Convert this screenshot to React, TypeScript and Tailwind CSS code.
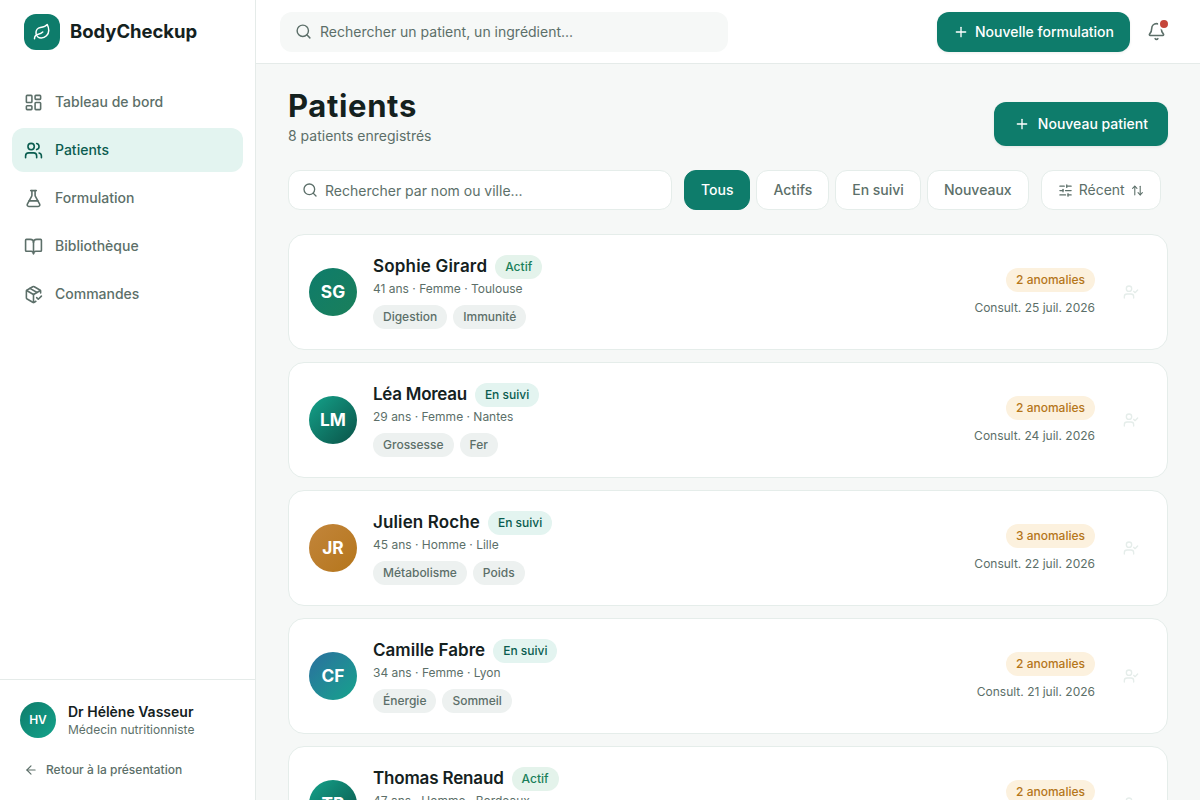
import React from 'react';
import {
  ArrowLeft,
  ArrowUpDown,
  Bell,
  BookOpen,
  FlaskConical,
  LayoutDashboard,
  Leaf,
  PackageCheck,
  Plus,
  Search,
  SlidersHorizontal,
  UserCheck,
  Users,
} from 'lucide-react';

type Status = 'Actif' | 'En suivi';

interface Patient {
  initials: string;
  name: string;
  nameTracking: string;
  status: Status;
  details: string;
  tags: string[];
  anomalies: number;
  consult: string;
  avatar: string;
}

const navItems = [
  { label: 'Tableau de bord', icon: LayoutDashboard },
  { label: 'Patients', icon: Users },
  { label: 'Formulation', icon: FlaskConical },
  { label: 'Bibliothèque', icon: BookOpen },
  { label: 'Commandes', icon: PackageCheck },
];

const filters = ['Tous', 'Actifs', 'En suivi', 'Nouveaux'];

const patients: Patient[] = [
  {
    initials: 'SG',
    name: 'Sophie Girard',
    nameTracking: 'tracking-[0.19px]',
    status: 'Actif',
    details: '41 ans · Femme · Toulouse',
    tags: ['Digestion', 'Immunité'],
    anomalies: 2,
    consult: '25 juil. 2026',
    avatar: 'from-[#0e7c6b] to-[#1a7f5a]',
  },
  {
    initials: 'LM',
    name: 'Léa Moreau',
    nameTracking: 'tracking-[-0.28px]',
    status: 'En suivi',
    details: '29 ans · Femme · Nantes',
    tags: ['Grossesse', 'Fer'],
    anomalies: 2,
    consult: '24 juil. 2026',
    avatar: 'from-[#14a38b] to-[#0a5348]',
  },
  {
    initials: 'JR',
    name: 'Julien Roche',
    nameTracking: 'tracking-[0.12px]',
    status: 'En suivi',
    details: '45 ans · Homme · Lille',
    tags: ['Métabolisme', 'Poids'],
    anomalies: 3,
    consult: '22 juil. 2026',
    avatar: 'from-[#c2853a] to-[#b5761a]',
  },
  {
    initials: 'CF',
    name: 'Camille Fabre',
    nameTracking: 'tracking-[0.03px]',
    status: 'En suivi',
    details: '34 ans · Femme · Lyon',
    tags: ['Énergie', 'Sommeil'],
    anomalies: 2,
    consult: '21 juil. 2026',
    avatar: 'from-[#2a6f9e] to-[#14a38b]',
  },
  {
    initials: 'TR',
    name: 'Thomas Renaud',
    nameTracking: 'tracking-[-0.17px]',
    status: 'Actif',
    details: '47 ans · Homme · Bordeaux',
    tags: ['Cardio', 'Stress'],
    anomalies: 2,
    consult: '20 juil. 2026',
    avatar: 'from-[#14a38b] to-[#0a5348]',
  },
];

function Sidebar({ currentPage }: { currentPage: string }) {
  return (
    <aside className="flex w-64 shrink-0 flex-col border-r border-[#e5ebe9] bg-white">
      <div className="flex h-16 items-center gap-2.5 px-6">
        <div className="flex size-9 items-center justify-center rounded-xl bg-[#0e7c6b] text-white">
          <Leaf size={18} strokeWidth={2} />
        </div>
        <span className="text-[18.5px] font-bold tracking-[-0.05px] text-[#14211e]">BodyCheckup</span>
      </div>

      <nav className="flex flex-1 flex-col gap-1 px-3 pt-4">
        {navItems.map(({ label, icon: Icon }) => (
          <a
            key={label}
            href="#"
            className={`flex h-11 items-center gap-3 rounded-xl px-3 text-sm font-medium ${
              label === currentPage ? 'bg-[#e3f4f0] text-[#0a5c4f]' : 'text-[#5c6f69]'
            }`}
          >
            <Icon size={19} strokeWidth={2} />
            {label}
          </a>
        ))}
      </nav>

      <div className="border-t border-[#e5ebe9] px-3 pt-3 pb-3">
        <div className="flex items-center gap-3 px-2 py-2.5">
          <div className="flex size-9 items-center justify-center rounded-full bg-linear-to-br from-[#0e7c6b] to-[#14a38b] text-xs font-semibold text-white">
            HV
          </div>
          <div className="-mb-0.5">
            <p className="text-sm leading-[18px] font-semibold text-[#14211e]">Dr Hélène Vasseur</p>
            <p className="text-xs leading-[18px] text-[#5c6f69]">Médecin nutritionniste</p>
          </div>
        </div>
        <a href="#" className="mt-1 flex h-9 items-center gap-2 px-3 text-xs font-medium text-[#5c6f69]">
          <ArrowLeft size={14} strokeWidth={2} />
          Retour à la présentation
        </a>
      </div>
    </aside>
  );
}

function Topbar() {
  return (
    <header className="flex h-16 shrink-0 items-center justify-between border-b border-[#e5ebe9] bg-white px-6">
      <div className="flex h-10 w-[448px] items-center gap-2 rounded-xl bg-[#f6f8f7] px-[15px] text-[#5c6f69]">
        <Search size={17} strokeWidth={2} />
        <span className="text-sm">Rechercher un patient, un ingrédient...</span>
      </div>
      <div className="flex items-center gap-1.5">
        <button className="flex h-10 items-center gap-1.5 rounded-xl bg-[#0e7c6b] px-4 text-sm font-medium text-white shadow-[0_1px_3px_rgba(20,33,30,0.08)]">
          <Plus size={16} strokeWidth={2} />
          Nouvelle formulation
        </button>
        <button className="relative flex size-10 items-center justify-center text-[#5c6f69]">
          <Bell size={19} strokeWidth={2} />
          <span className="absolute top-1.5 right-1.5 size-3 rounded-full border-2 border-white bg-[#c4453a]" />
        </button>
      </div>
    </header>
  );
}

function PatientCard({ patient }: { patient: Patient }) {
  return (
    <div className="flex items-center rounded-2xl border border-[#e5edea] bg-white p-5">
      <div
        className={`flex size-12 items-center justify-center rounded-full bg-linear-to-br text-[17.28px] leading-6 font-bold text-white ${patient.avatar}`}
      >
        {patient.initials}
      </div>
      <div className="ml-4 flex-1">
        <div className="flex h-6 items-center gap-2">
          <h3 className={`pb-0.5 text-[17px] leading-6 font-semibold text-[#14211e] ${patient.nameTracking}`}>
            {patient.name}
          </h3>
          <span
            className={`flex h-6 items-center rounded-full px-2.5 text-xs font-medium ${
              patient.status === 'Actif' ? 'bg-[#e4f3eb] text-[#1a7f5a]' : 'bg-[#e3f4f0] text-[#0a5c4f]'
            }`}
          >
            {patient.status}
          </span>
        </div>
        <p className="text-xs leading-5 text-[#5c6f69]">{patient.details}</p>
        <div className="mt-1.5 flex gap-1.5">
          {patient.tags.map((tag) => (
            <span
              key={tag}
              className="flex h-6 items-center rounded-full bg-[#edf1f0] px-2.5 text-xs font-medium text-[#5c6f69]"
            >
              {tag}
            </span>
          ))}
        </div>
      </div>
      <div className="flex flex-col items-end gap-2">
        <span className="flex h-6 items-center rounded-full bg-[#fcf1de] px-2.5 text-xs font-medium text-[#b5761a]">
          {patient.anomalies} anomalies
        </span>
        <span className="text-xs text-[#5c6f69]">Consult. {patient.consult}</span>
      </div>
      <div className="ml-5 flex size-8 items-center justify-center text-[#e5edea]">
        <UserCheck size={16} strokeWidth={2} />
      </div>
    </div>
  );
}

export default function App() {
  return (
    <div className="flex h-screen overflow-hidden bg-[#f6f8f7] font-['Inter',sans-serif]">
      <Sidebar currentPage="Patients" />

      <div className="flex min-w-0 flex-1 flex-col">
        <Topbar />

        <main className="flex-1 overflow-hidden px-8 pt-6">
          <div className="flex items-end justify-between">
            <div>
              <h1 className="h-9 text-[31px] leading-[35px] font-bold tracking-[0.65px] text-[#14211e]">Patients</h1>
              <p className="mt-0.5 text-sm text-[#5c6f69]">8 patients enregistrés</p>
            </div>
            <button className="flex h-11 items-center gap-2 rounded-xl bg-[#0e7c6b] px-5 text-sm font-medium text-white shadow-[0_1px_3px_rgba(20,33,30,0.08)]">
              <Plus size={16} strokeWidth={2} />
              Nouveau patient
            </button>
          </div>

          <div className="mt-6 flex gap-3">
            <div className="flex h-10 w-96 items-center gap-[7px] rounded-xl border border-[#e5edea] bg-white px-[13px] text-[#5c6f69]">
              <Search size={16} strokeWidth={2} />
              <span className="pt-0.5 text-sm">Rechercher par nom ou ville...</span>
            </div>
            <div className="flex gap-1.5">
              {filters.map((filter) => (
                <button
                  key={filter}
                  className={`h-10 rounded-xl border px-4 text-sm font-medium ${
                    filter === 'Tous'
                      ? 'border-[#0e7c6b] bg-[#0e7c6b] text-white'
                      : 'border-[#e5edea] bg-white text-[#5c6f69]'
                  }`}
                >
                  {filter}
                </button>
              ))}
            </div>
            <button className="flex h-10 items-center gap-1.5 rounded-xl border border-[#e5edea] bg-white px-4 text-sm text-[#5c6f69]">
              <SlidersHorizontal size={15} strokeWidth={2} />
              Récent
              <ArrowUpDown size={13} strokeWidth={2} />
            </button>
          </div>

          <div className="mt-6 flex flex-col gap-3">
            {patients.map((patient) => (
              <PatientCard key={patient.name} patient={patient} />
            ))}
          </div>
        </main>
      </div>
    </div>
  );
}
